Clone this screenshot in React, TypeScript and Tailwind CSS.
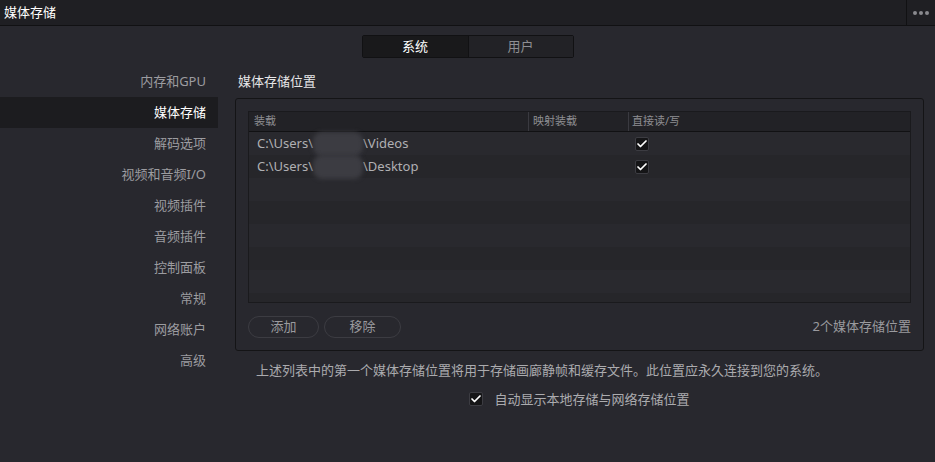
import { Check } from "lucide-react";

const navItems = [
  "内存和GPU",
  "媒体存储",
  "解码选项",
  "视频和音频I/O",
  "视频插件",
  "音频插件",
  "控制面板",
  "常规",
  "网络账户",
  "高级",
];

const paths = ["\\Videos", "\\Desktop"];

const CheckBox = () => (
  <div className="w-[14px] h-[14px] rounded-[2px] bg-[#151517] border border-[#3c3c42] flex items-center justify-center">
    <Check size={12} strokeWidth={3.5} className="text-white" />
  </div>
);

const App = () => {
  return (
    <div
      className="w-[935px] h-[462px] bg-[#28282e] flex flex-col text-[13px] text-[#9c9ca0] overflow-hidden"
      style={{ fontFamily: '"Noto Sans", "Noto Sans CJK SC", sans-serif' }}
    >
      {/* title bar */}
      <div className="h-[26px] flex items-stretch bg-[#1f1f23] border-b border-[#111113]">
        <div className="flex-1 flex items-center pl-[4px] text-white text-[13px]">媒体存储</div>
        <div className="w-[29px] border-l border-[#111113] flex items-center justify-center gap-[2px]">
          <span className="w-[4px] h-[4px] rounded-full bg-[#8a8a8e]" />
          <span className="w-[4px] h-[4px] rounded-full bg-[#8a8a8e]" />
          <span className="w-[4px] h-[4px] rounded-full bg-[#8a8a8e]" />
        </div>
      </div>

      {/* tabs */}
      <div className="flex justify-center mt-[9px]">
        <div className="flex border border-[#111113] rounded-[2px] h-[23px] text-[13px]">
          <div className="w-[105px] flex items-center justify-center bg-[#19191b] text-white">系统</div>
          <div className="w-[105px] flex items-center justify-center bg-[#222226] border-l border-[#111113] text-[#8e8e92]">用户</div>
        </div>
      </div>

      <div className="flex mt-[8px]">
        {/* sidebar */}
        <div className="w-[218px] flex flex-col">
          {navItems.map((item) => (
            <div
              key={item}
              className={
                item === "媒体存储"
                  ? "h-[31px] flex items-center justify-end pr-[12px] bg-[#1c1c1f] text-white"
                  : "h-[31px] flex items-center justify-end pr-[12px]"
              }
            >
              {item}
            </div>
          ))}
        </div>

        {/* content */}
        <div className="ml-[17px] w-[689px] flex flex-col">
          <div className="h-[32px] flex items-center pl-[3px] text-[#e6e6e8]">媒体存储位置</div>

          <div className="border border-[#141416] rounded-[3px] px-[12px] pt-[12px] pb-[12px] flex flex-col">
            {/* table */}
            <div className="h-[192px] border border-[#1a1a1d] bg-[#29292e] flex flex-col overflow-hidden">
              <div className="h-[20px] flex bg-[#222226] border-b border-[#111113] text-[11px] text-[#8e8e92]">
                <div className="w-[280px] pl-[5px] flex items-center border-r border-[#3a3a40]">装载</div>
                <div className="w-[100px] pl-[4px] flex items-center border-r border-[#3a3a40]">映射装载</div>
                <div className="flex-1 pl-[3px] flex items-center">直接读/写</div>
              </div>
              {paths.map((p, i) => (
                <div key={p} className={i % 2 === 0 ? "h-[23px] flex bg-[#29292e]" : "h-[23px] flex bg-[#26262a]"}>
                  <div className="w-[379px] pl-[8px] flex items-center text-[#b0b0b3]">
                    <span>C:\Users\</span>
                    <span className="w-[50px] h-[24px] rounded-[9px] bg-[#3c3c42] blur-[2px]" />
                    <span>{p}</span>
                  </div>
                  <div className="flex-1 pl-[7px] flex items-center">
                    <CheckBox />
                  </div>
                </div>
              ))}
              <div className="h-[23px] bg-[#29292e]" />
              <div className="h-[23px] bg-[#26262a]" />
              <div className="h-[23px] bg-[#29292e]" />
              <div className="h-[23px] bg-[#26262a]" />
              <div className="h-[23px] bg-[#29292e]" />
              <div className="flex-1 bg-[#26262a]" />
            </div>

            {/* buttons */}
            <div className="flex items-center mt-[12px] h-[23px]">
              <button className="w-[71px] h-[22px] rounded-full border border-[#3c3c42] text-[#9a9a9e] text-[13px]">添加</button>
              <button className="ml-[5px] w-[77px] h-[22px] rounded-full border border-[#3c3c42] text-[#9a9a9e] text-[13px]">移除</button>
              <div className="flex-1 text-right text-[#9a9a9e]">2个媒体存储位置</div>
            </div>
          </div>

          <div className="mt-[10px] pl-[21px] text-[13px] text-[#ababae]">
            上述列表中的第一个媒体存储位置将用于存储画廊静帧和缓存文件。此位置应永久连接到您的系统。
          </div>

          <div className="mt-[9px] flex justify-center items-center gap-[11px] text-[#ababae]">
            <CheckBox />
            <span>自动显示本地存储与网络存储位置</span>
          </div>
        </div>
      </div>
    </div>
  );
};

export default App;
